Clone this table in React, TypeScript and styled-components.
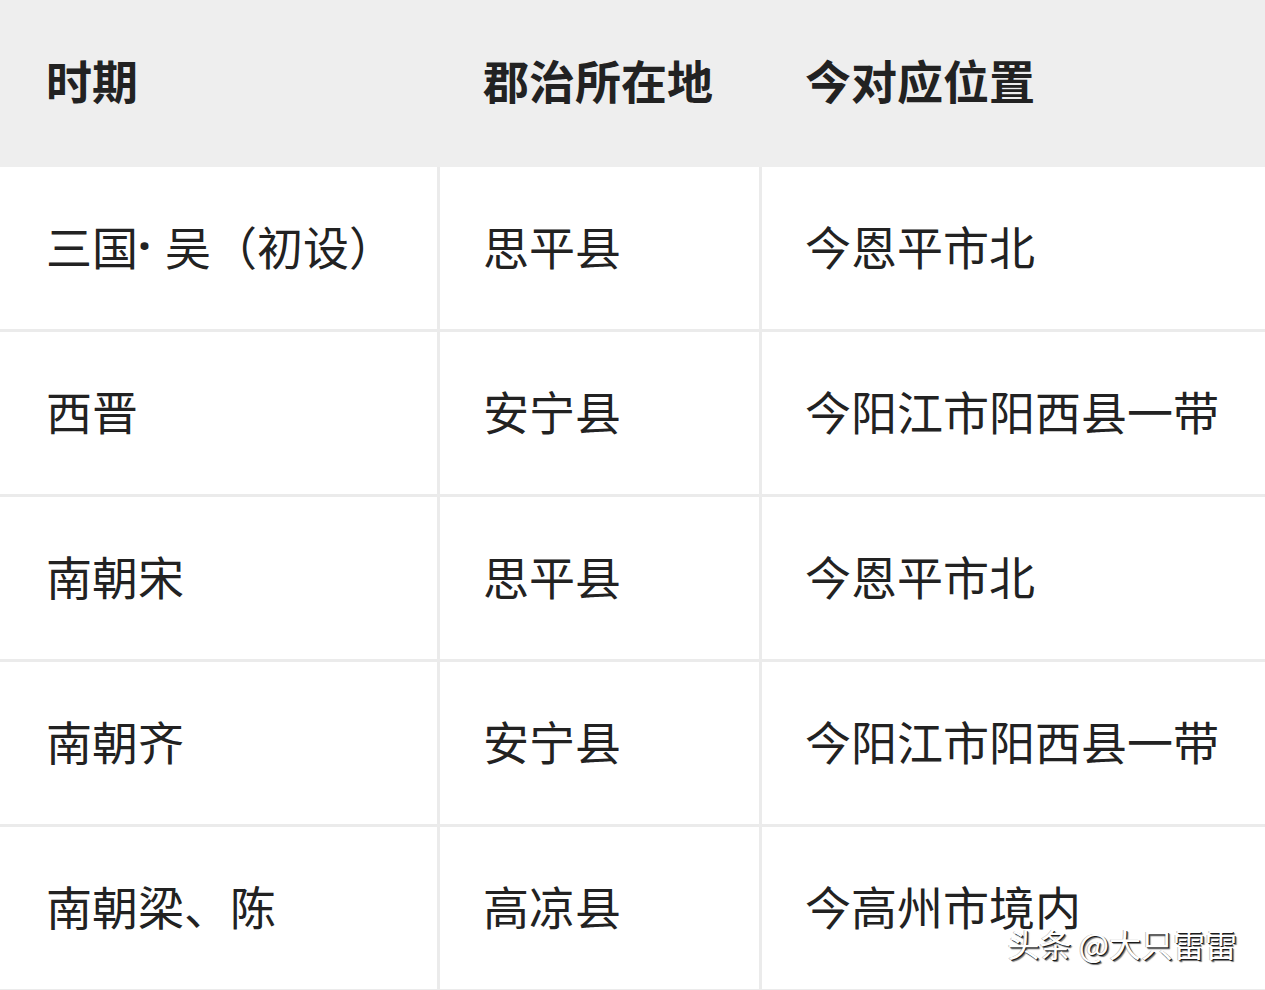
import styled, { createGlobalStyle } from "styled-components";

const GlobalStyle = createGlobalStyle`
  html, body {
    margin: 0;
    padding: 0;
    background: #ffffff;
  }
  body {
    font-family: "Noto Sans CJK SC", "Noto Sans", sans-serif;
    color: #222222;
    overflow: hidden;
  }
`;

const Page = styled.div`
  position: relative;
  width: 1265px;
  height: 990px;
  overflow: hidden;
`;

const Row = styled.div<{ $head?: boolean }>`
  display: grid;
  grid-template-columns: 437px 322px 1fr;
  height: ${(p) => (p.$head ? "167px" : "162px")};
  background: ${(p) => (p.$head ? "#eeeeee" : "#ffffff")};
  border-bottom: ${(p) => (p.$head ? "none" : "3px solid #ebebeb")};
`;

const Cell = styled.div<{ $head?: boolean; $first?: boolean }>`
  display: flex;
  align-items: center;
  box-sizing: border-box;
  border-left: ${(p) =>
    p.$first || p.$head ? "none" : "3px solid #ebebeb"};
  padding-left: ${(p) => (p.$first || p.$head ? "46px" : "43px")};
  padding-bottom: ${(p) => (p.$head ? "10px" : "7px")};
  font-size: 46px;
  font-weight: ${(p) => (p.$head ? 700 : 400)};
  line-height: 1;
  white-space: nowrap;
  color: #222222;
`;

const Dot = styled.span`
  display: inline-block;
  width: 27px;
  padding-left: 0;
  box-sizing: border-box;
  font-family: "Noto Sans", sans-serif;
  font-weight: 700;
`;

const Watermark = styled.div`
  position: absolute;
  right: 28px;
  bottom: 31px;
  font-size: 32px;
  line-height: 1;
  color: #ffffff;
  text-shadow: 1px 1px 0 #1a1a1a, 2px 2px 1px rgba(0, 0, 0, 0.55),
    -1px 0 0 rgba(0, 0, 0, 0.25);
`;

const rows = [
  [
    <>
      三国<Dot>·</Dot>吴（初设）
    </>,
    "思平县",
    "今恩平市北",
  ],
  ["西晋", "安宁县", "今阳江市阳西县一带"],
  ["南朝宋", "思平县", "今恩平市北"],
  ["南朝齐", "安宁县", "今阳江市阳西县一带"],
  ["南朝梁、陈", "高凉县", "今高州市境内"],
];

export default function App() {
  return (
    <Page>
      <GlobalStyle />
      <Row $head>
        <Cell $head $first>
          时期
        </Cell>
        <Cell $head>郡治所在地</Cell>
        <Cell $head>今对应位置</Cell>
      </Row>
      {rows.map((r, i) => (
        <Row key={i}>
          <Cell $first>{r[0]}</Cell>
          <Cell>{r[1]}</Cell>
          <Cell>{r[2]}</Cell>
        </Row>
      ))}
      <Watermark>头条 @大只雷雷</Watermark>
    </Page>
  );
}
